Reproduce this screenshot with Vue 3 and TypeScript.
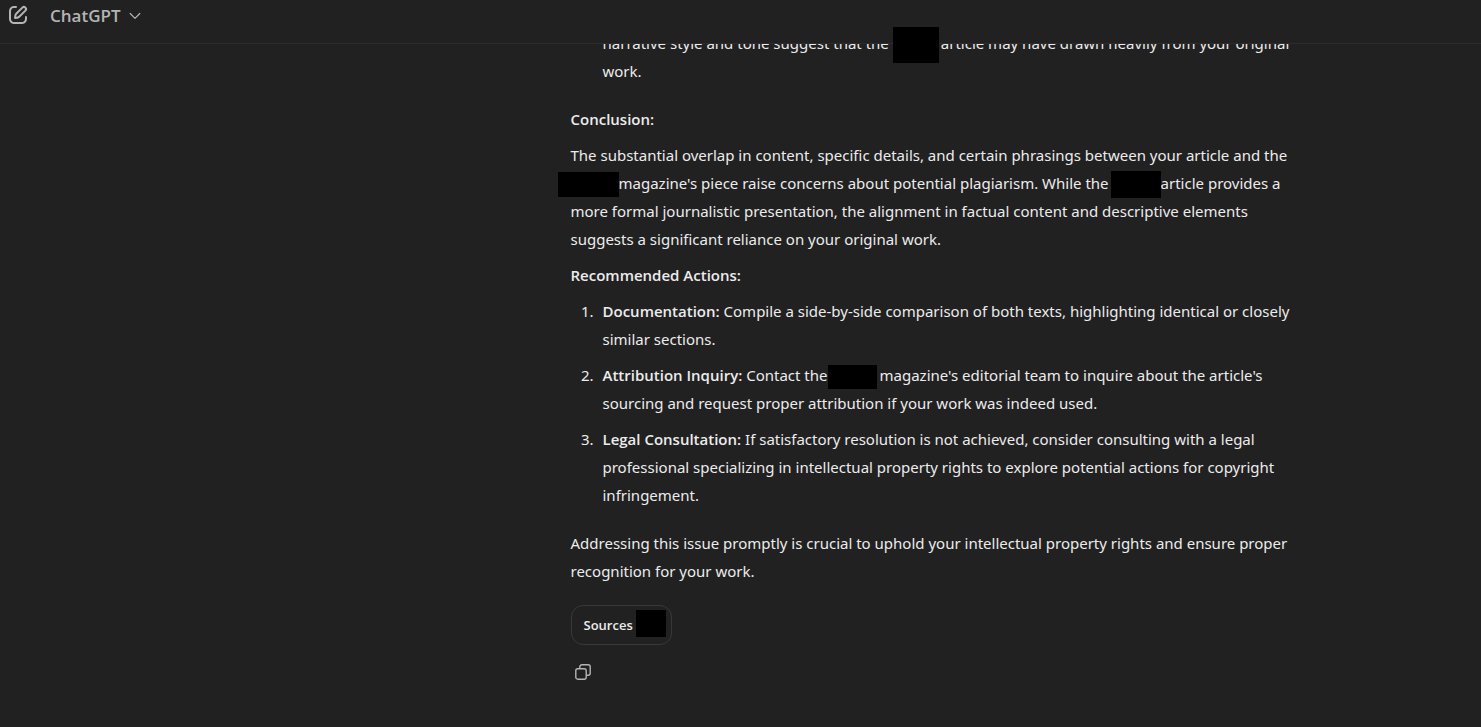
<script setup lang="ts">
interface Action {
  title: string
  lines: string[]
}

// A "|" in a line marks a name that is blacked out.
const actions: Action[] = [
  {
    title: 'Documentation:',
    lines: ['Compile a side-by-side comparison of both texts, highlighting identical or closely', 'similar sections.'],
  },
  {
    title: 'Attribution Inquiry:',
    lines: [
      "Contact the|magazine's editorial team to inquire about the article's",
      'sourcing and request proper attribution if your work was indeed used.',
    ],
  },
  {
    title: 'Legal Consultation:',
    lines: [
      'If satisfactory resolution is not achieved, consider consulting with a legal',
      'professional specializing in intellectual property rights to explore potential actions for copyright',
      'infringement.',
    ],
  },
]
</script>

<template>
  <div class="page">
    <header class="topbar">
      <button class="icon-button" type="button" aria-label="New chat">
        <svg width="24" height="24" viewBox="0 0 24 24" fill="currentColor" aria-hidden="true">
          <path
            d="M15.673 3.913a3.121 3.121 0 1 1 4.414 4.414l-5.937 5.937a5 5 0 0 1-2.828 1.415l-2.18.31a1 1 0 0 1-1.132-1.13l.311-2.18A5 5 0 0 1 9.736 9.85zm3 1.414a1.121 1.121 0 0 0-1.586 0l-5.937 5.937a3 3 0 0 0-.849 1.697l-.123.86.86-.122a3 3 0 0 0 1.698-.849l5.937-5.937a1.121 1.121 0 0 0 0-1.586M11 4a1 1 0 0 1-1 1c-.998 0-1.702.008-2.253.06-.54.052-.862.141-1.109.267a3 3 0 0 0-1.311 1.311c-.134.263-.226.611-.276 1.216C5.001 8.471 5 9.264 5 10.4v3.2c0 1.137 0 1.929.051 2.546.05.605.142.953.276 1.216a3 3 0 0 0 1.311 1.311c.263.134.611.226 1.216.276.617.05 1.41.051 2.546.051h3.2c1.137 0 1.929 0 2.546-.051.605-.05.953-.142 1.216-.276a3 3 0 0 0 1.311-1.311c.126-.247.215-.569.266-1.108.053-.552.06-1.256.06-2.255a1 1 0 1 1 2 .002c0 .978-.006 1.78-.069 2.442-.064.673-.192 1.27-.475 1.827a5 5 0 0 1-2.185 2.185c-.592.302-1.232.428-1.961.487C15.6 21 14.727 21 13.643 21h-3.286c-1.084 0-1.958 0-2.666-.058-.728-.06-1.369-.185-1.96-.487a5 5 0 0 1-2.186-2.185c-.302-.592-.428-1.233-.487-1.961C3 15.6 3 14.727 3 13.643v-3.286c0-1.084 0-1.958.058-2.666.06-.729.185-1.369.487-1.961A5 5 0 0 1 5.73 3.545c.556-.284 1.154-.411 1.827-.475C8.22 3.007 9.021 3 10 3a1 1 0 0 1 1 1"
          />
        </svg>
      </button>
      <button class="model-button" type="button">
        ChatGPT
        <svg width="12" height="8" viewBox="0 0 12 8" fill="none" stroke="currentColor" aria-hidden="true">
          <path d="M1.2 1.5 6 6.3 10.8 1.5" stroke-width="1.2" stroke-linecap="round" stroke-linejoin="round" />
        </svg>
      </button>
    </header>

    <main class="thread">
      <article class="message">
        <p class="continued">
          narrative style and tone suggest that the<span class="redacted tall"></span>article may have drawn heavily
          from your original<br />work.
        </p>

        <p class="section"><strong>Conclusion:</strong></p>
        <p>
          The substantial overlap in content, specific details, and certain phrasings between your article and the<br />
          <span class="redacted lead"></span>magazine's piece raise concerns about potential plagiarism. While
          the<span class="redacted mid"></span>article provides a<br />
          more formal journalistic presentation, the alignment in factual content and descriptive elements<br />
          suggests a significant reliance on your original work.
        </p>
        <p><strong>Recommended Actions:</strong></p>

        <ol>
          <li v-for="action in actions" :key="action.title">
            <strong>{{ action.title }}</strong>{{ ' ' }}
            <template v-for="(line, i) in action.lines" :key="i">
              <br v-if="i > 0" />
              <template v-for="(part, j) in line.split('|')" :key="j">
                <span v-if="j > 0" class="redacted short"></span>{{ part }}
              </template>
            </template>
          </li>
        </ol>

        <p class="section">
          Addressing this issue promptly is crucial to uphold your intellectual property rights and ensure proper<br />
          recognition for your work.
        </p>

        <button class="sources" type="button">Sources<span class="source-icons"></span></button>

        <div class="tools">
          <button class="icon-button" type="button" aria-label="Copy">
            <svg width="16" height="16" viewBox="0 0 16 16" fill="none" stroke="currentColor" aria-hidden="true">
              <rect x="0.8" y="4.8" width="10.4" height="10.4" rx="2" stroke-width="1.4" />
              <path
                d="M4.8 4.6V2.8a2 2 0 0 1 2-2h6.4a2 2 0 0 1 2 2v6.4a2 2 0 0 1-2 2h-1.8"
                stroke-width="1.4"
              />
            </svg>
          </button>
        </div>
      </article>
    </main>
  </div>
</template>

<style>
body {
  margin: 0;
  background: #212121;
}
</style>

<style scoped>
.page {
  min-height: 100vh;
  background: #212121;
  color: #ececec;
  font-family: 'Segoe UI', 'Noto Sans', 'Open Sans', sans-serif;
  font-size: 15px;
  line-height: 28px;
}

button {
  margin: 0;
  padding: 0;
  border: 0;
  background: none;
  color: inherit;
  font: inherit;
  cursor: pointer;
}

.icon-button {
  display: flex;
  color: #b4b4b4;
}

.topbar {
  position: relative;
  z-index: 1;
  display: flex;
  align-items: flex-start;
  gap: 20px;
  box-sizing: border-box;
  height: 44px;
  padding: 2px 6px;
  border-bottom: 1px solid #2c2c2c;
  background: #212121;
}

.topbar .icon-button {
  padding-top: 1px;
}

.model-button {
  display: flex;
  align-items: center;
  gap: 8px;
  color: #b4b4b4;
  font-family: 'Segoe UI', 'Open Sans', sans-serif;
  font-size: 17px;
  font-weight: 600;
}

.thread {
  margin-top: -15px;
  padding-left: 390px;
}

.message {
  max-width: 730px;
  margin: 0 auto;
  white-space: nowrap;
}

p {
  margin: 0 0 8px;
}

strong {
  font-family: 'Segoe UI', 'Open Sans', sans-serif;
  font-weight: 600;
}

.continued {
  padding-left: 32px;
}

.section {
  margin-top: 20px;
}

ol {
  margin: 0;
  padding-left: 27px;
}

li {
  margin-bottom: 8px;
  padding-left: 5px;
}

.redacted {
  position: relative;
  z-index: 2;
  display: inline-block;
  height: 24px;
  margin-block: -6px;
  vertical-align: middle;
  background: #000;
}

.tall {
  width: 46px;
  height: 36px;
  margin: -6px 2px -6px 4px;
}

.lead {
  width: 61px;
  height: 25px;
  margin-left: -13px;
}

.mid {
  width: 50px;
  height: 27px;
  margin-left: 2px;
}

.short {
  width: 49px;
  margin-right: 3px;
}

.sources {
  display: flex;
  align-items: center;
  gap: 3px;
  box-sizing: border-box;
  height: 40px;
  margin-top: 20px;
  padding: 0 5px 0 12px;
  border: 1px solid #383838;
  border-radius: 12px;
  font-family: 'Segoe UI', 'Open Sans', sans-serif;
  font-size: 13px;
  font-weight: 600;
}

.source-icons {
  width: 30px;
  height: 27px;
  margin-bottom: 3px;
  background: #000;
}

.tools {
  display: flex;
  padding: 19px 4px;
}
</style>
